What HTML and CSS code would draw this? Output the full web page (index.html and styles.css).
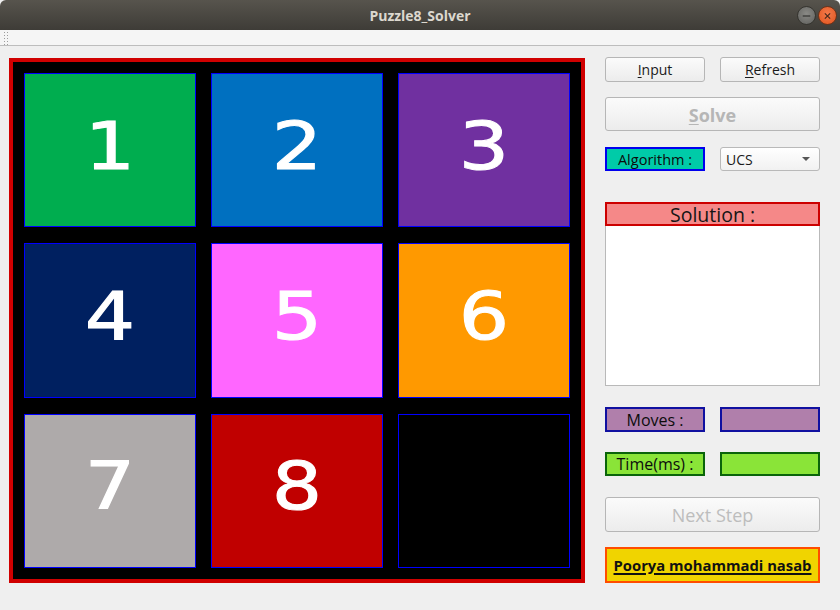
FILE: index.html
```html
<!DOCTYPE html>
<html>
<head>
<meta charset="utf-8">
<link rel="stylesheet" href="styles.css">
</head>
<body>
<div class="window">
  <div class="titlebar">
    <span class="title">Puzzle8_Solver</span>
    <div class="controls">
      <span class="ctl min"><svg width="18" height="18" viewBox="0 0 18 18"><line x1="5" y1="9" x2="13" y2="9" stroke="#3a3a37" stroke-width="1.4"/></svg></span>
      <span class="ctl close"><svg width="18" height="18" viewBox="0 0 18 18"><path d="M6.2 6.2 L11.8 11.8 M11.8 6.2 L6.2 11.8" stroke="#4a2a1c" stroke-width="1.3"/></svg></span>
    </div>
  </div>
  <div class="toolbar"><span class="grip"></span></div>
  <div class="main">
    <div class="board">
      <div class="tile t1"><span>1</span></div>
      <div class="tile t2"><span>2</span></div>
      <div class="tile t3"><span>3</span></div>
      <div class="tile t4"><span>4</span></div>
      <div class="tile t5"><span>5</span></div>
      <div class="tile t6"><span>6</span></div>
      <div class="tile t7"><span>7</span></div>
      <div class="tile t8"><span>8</span></div>
      <div class="tile t0"></div>
    </div>
    <div class="panel">
      <div class="row r-top">
        <button class="btn half"><u>I</u>nput</button>
        <button class="btn half"><u>R</u>efresh</button>
      </div>
      <button class="btn wide solve" disabled><u>S</u>olve</button>
      <div class="row r-alg">
        <div class="lbl alg">Algorithm :</div>
        <div class="combo"><span>UCS</span><span class="arrow"></span></div>
      </div>
      <div class="solution">Solution :</div>
      <div class="list"></div>
      <div class="row r-moves">
        <div class="lbl moves">Moves :</div>
        <div class="lbl moves"></div>
      </div>
      <div class="row r-time">
        <div class="lbl time">Time(ms) :</div>
        <div class="lbl time"></div>
      </div>
      <button class="btn wide next" disabled>Next Step</button>
      <div class="author">Poorya mohammadi nasab</div>
    </div>
  </div>
</div>
</body>
</html>
```
FILE: styles.css
```css
* { box-sizing: border-box; }
html, body { margin: 0; padding: 0; }
body {
  width: 840px;
  height: 610px;
  background: #efefef;
  font-family: "Open Sans", "Noto Sans", sans-serif;
  overflow: hidden;
}
.window { width: 840px; height: 610px; display: flex; flex-direction: column; }
.titlebar {
  height: 30px;
  background: linear-gradient(#57544d, #3e3c37);
  display: flex;
  align-items: center;
  justify-content: center;
  position: relative;
  border-top-left-radius: 6px;
  border-top-right-radius: 6px;
}
.title {
  color: #dcd8cf;
  font-family: "Open Sans", sans-serif;
  font-weight: 700;
  font-size: 14px;
}
.controls {
  position: absolute;
  right: 3px;
  top: 6px;
  display: flex;
  gap: 2px;
}
.ctl {
  width: 19px;
  height: 19px;
  border-radius: 50%;
  display: flex;
  align-items: center;
  justify-content: center;
}
.ctl svg { display: block; }
.min { background: radial-gradient(circle at 50% 40%, #8a8a86, #5f5f5c); border: 1px solid #35342f; }
.close { background: radial-gradient(circle at 50% 40%, #f47a4b, #e0531d); border: 1px solid #6e3218; }
.toolbar {
  height: 16px;
  background: #f5f5f5;
  border-bottom: 1px solid #bdbdbd;
  position: relative;
}
.grip {
  position: absolute;
  left: 3px;
  top: 1px;
  width: 6px;
  height: 14px;
  background-image: radial-gradient(circle, #9c9c9c 0.9px, transparent 1px);
  background-size: 3px 3px;
}
.main {
  display: flex;
  padding: 12px 0 0 9px;
  gap: 20px;
}
.board {
  width: 576px;
  height: 525px;
  border: 4px solid #d00000;
  background: #000;
  padding: 11px;
  display: grid;
  grid-template-columns: repeat(3, 1fr);
  grid-template-rows: repeat(3, 1fr);
  column-gap: 15px;
  row-gap: 16px;
}
.tile {
  border: 1px solid #0000ff;
  color: #fff;
  font-family: "DejaVu Sans", sans-serif;
  font-size: 66px;
  display: flex;
  align-items: center;
  justify-content: center;
  padding-bottom: 8px;
}
.tile span {
  display: block;
  transform: scaleX(1.2);
  -webkit-text-stroke: 1px #fff;
}
.t1 { background: #00ad4f; }
.t2 { background: #0070c0; }
.t3 { background: #7030a0; }
.t4 { background: #002060; }
.t5 { background: #ff66ff; }
.t6 { background: #ff9900; }
.t7 { background: #aeaaaa; }
.t8 { background: #c00000; }
.t0 { background: #000; }
.panel {
  width: 215px;
  display: flex;
  flex-direction: column;
  margin-top: -1px;
}
.row { display: flex; justify-content: space-between; }
.btn {
  font-family: "Open Sans", sans-serif;
  background: linear-gradient(#fbfbfb, #ececec);
  border: 1px solid #b6b6b6;
  border-radius: 3px;
  color: #1a1a1a;
  padding: 0;
  display: flex;
  align-items: center;
  justify-content: center;
}
.btn u { text-decoration-thickness: 1px; text-underline-offset: 2px; }
.half { width: 100px; height: 25px; font-size: 14px; }
.wide { width: 215px; }
.solve {
  margin-top: 15px;
  height: 34px;
  font-size: 18px;
  font-weight: 700;
  color: #b6b6b6;
  padding-top: 2px;
}
.next {
  margin-top: 21px;
  height: 35px;
  font-size: 18px;
  color: #bdbdbd;
}
.r-alg { margin-top: 16px; height: 24px; }
.lbl {
  width: 100px;
  height: 100%;
  display: flex;
  align-items: center;
  justify-content: center;
  color: #0c0c0c;
}
.alg { background: #00cba8; border: 2px solid #0000ee; font-size: 14.5px; }
.combo {
  width: 100px;
  height: 24px;
  border: 1px solid #b9b9b9;
  border-radius: 3px;
  background: linear-gradient(#ffffff, #f1f1f1);
  display: flex;
  align-items: center;
  justify-content: space-between;
  padding: 0 9px 0 5px;
  font-size: 14px;
  color: #1a1a1a;
}
.arrow {
  width: 0;
  height: 0;
  border-left: 4px solid transparent;
  border-right: 4px solid transparent;
  border-top: 4px solid #555;
}
.solution {
  margin-top: 31px;
  height: 24px;
  background: #f58888;
  border: 2px solid #cc0000;
  display: flex;
  align-items: center;
  justify-content: center;
  font-size: 19.5px;
  color: #151515;
}
.list {
  height: 160px;
  background: #fff;
  border: 1px solid #b9b9b9;
  border-top: none;
}
.r-moves { margin-top: 21px; height: 25px; }
.moves { background: #b07fab; border: 2px solid #1010a0; font-size: 16px; }
.r-time { margin-top: 20px; height: 24px; }
.time { background: #8ae438; border: 2px solid #0a640a; font-size: 16px; }
.author {
  margin-top: 15px;
  height: 36px;
  background: #f0d400;
  border: 2px solid #ff4d00;
  display: flex;
  align-items: center;
  justify-content: center;
  font-size: 14.8px;
  font-weight: 700;
  text-decoration: underline;
  text-decoration-thickness: 2px;
  text-underline-offset: 2px;
  color: #111;
}
```
